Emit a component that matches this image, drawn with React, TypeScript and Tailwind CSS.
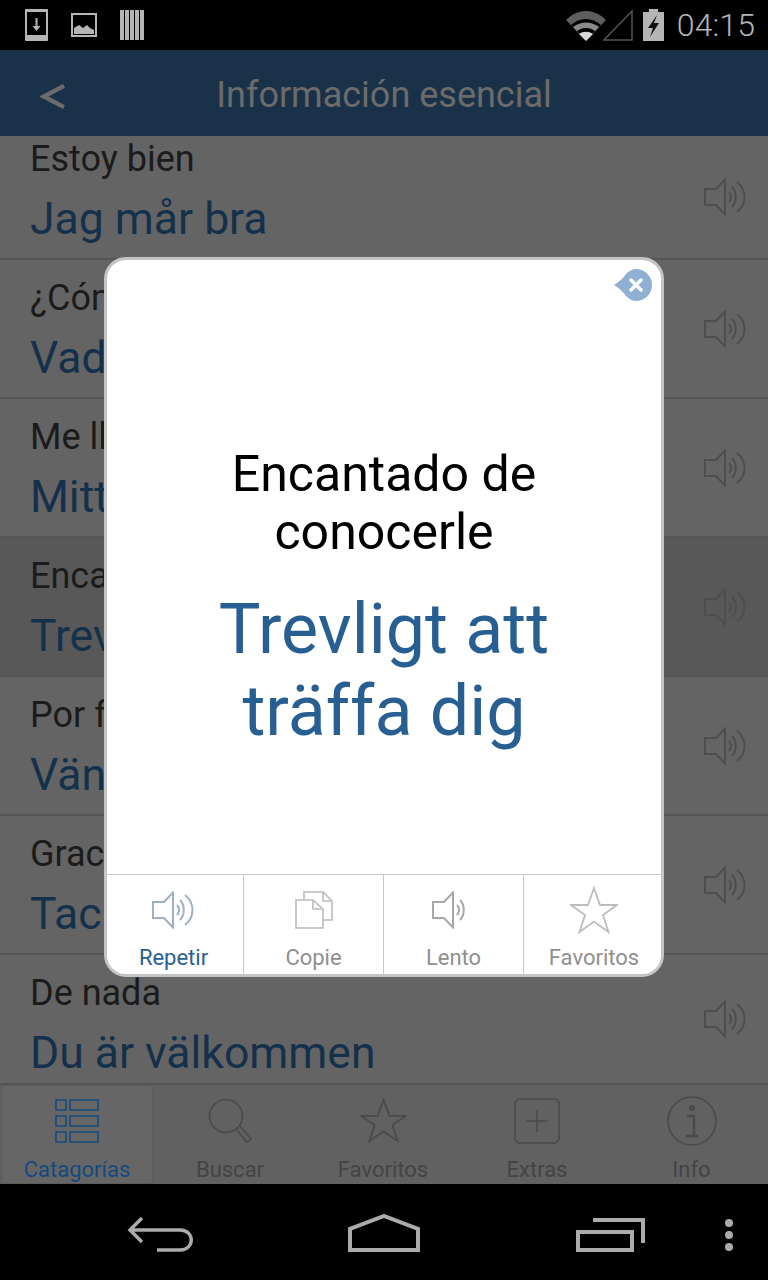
const sans = "font-['Roboto',sans-serif]";

const rows = [
  { es: "Estoy bien", sv: "Jag mår bra", h: "h-[124px]", pad: "pt-[3px]" },
  { es: "¿Cómo estás?", sv: "Vad heter du?", h: "h-[139px]" },
  { es: "Me llamo", sv: "Mitt namn är", h: "h-[139px]" },
  { es: "Encantado de conocerle", sv: "Trevligt att träffa dig", h: "h-[139px]", active: true },
  { es: "Por favor", sv: "Vänligen", h: "h-[139px]" },
  { es: "Gracias", sv: "Tack", h: "h-[139px]" },
  { es: "De nada", sv: "Du är välkommen", h: "h-[128px]", last: true },
];

function Speaker({ className, stroke, waves = 3 }: { className: string; stroke: string; waves?: number }) {
  return (
    <svg viewBox={waves > 2 ? "0 0 42 38" : "0 0 36 38"} className={className} fill="none" stroke={stroke} strokeWidth="2">
      <path d="M1 11h11L21 1.500v35L12 27H1z" />
      <path d="M25 14c2.500 3 2.500 7 0 10" />
      <path d="M28 9c5 5 5 15 0 20" />
      {waves > 2 && <path d="M33 4c10 8 10 22 0 30" />}
    </svg>
  );
}

function Star({ className, stroke }: { className: string; stroke: string }) {
  return (
    <svg viewBox="0 0 48 48" className={className} fill="none" stroke={stroke} strokeWidth="1.800" preserveAspectRatio="none">
      <path d="M24 2l6 17h17L33 29l5.500 17L24 35.500 9.500 46 15 29 1 19h17z" />
    </svg>
  );
}

function ListRow({ row }: { row: (typeof rows)[number] }) {
  return (
    <div className={`relative ${row.h} shrink-0 ${row.last ? "" : "border-b-2 border-[#555555]"} ${row.active ? "bg-[#585858]" : ""} ${row.pad ?? "pt-[18px]"} pl-[30px]`}>
      <p className="text-[36px] leading-[40px] text-[#1b1b1b] whitespace-nowrap">{row.es}</p>
      <p className="mt-[15px] text-[44.500px] leading-[50px] text-[#14304a] whitespace-nowrap">{row.sv}</p>
      <div className="absolute right-[22px] top-1/2 -translate-y-1/2">
        <Speaker className="w-[42px] h-[38px]" stroke="#4e4e4e" />
      </div>
    </div>
  );
}

function ModalAction({ label, active, children, className }: { label: string; active?: boolean; children: React.ReactNode; className: string }) {
  return (
    <div className={`flex flex-col items-center pb-[2px] h-full ${className}`}>
      <div className="flex-1 flex items-center justify-center pt-[1px]">{children}</div>
      <span className={`text-[22px] leading-[28px] ${active ? "text-[#285f92]" : "text-[#8f8f8f]"}`}>{label}</span>
    </div>
  );
}

function TabItem({ label, active, children, className }: { label: string; active?: boolean; children: React.ReactNode; className: string }) {
  return (
    <div className={`flex flex-col items-center h-full border rounded-[3px] ${className} ${active ? "bg-[#666666] border-[#5c5c5c]" : "border-transparent"}`}>
      <div className="h-[64px] mt-[3px] flex items-center justify-center">{children}</div>
      <span className={`text-[22px] leading-[26px] mt-[5px] whitespace-nowrap ${active ? "text-[#14497f]" : "text-[#444444]"}`}>{label}</span>
    </div>
  );
}

export default function App() {
  return (
    <div className={`relative w-[768px] h-[1280px] overflow-hidden bg-black ${sans}`}>
      {/* status bar */}
      <div className="h-[50px] flex items-center justify-between pl-[25px] pr-[13px]">
        <div className="flex items-center gap-[23px]">
          <svg viewBox="0 0 23 32" className="w-[23px] h-[32px]" fill="#b5b5b5">
            <path fillRule="evenodd" d="M0 1q0-1 1-1h21q1 0 1 1v30q0 1-1 1H1q-1 0-1-1zM2 3v23h19V3z" />
            <path d="M10.500 9h2v8h3l-4 5-4-5h3z" />
          </svg>
          <svg viewBox="0 0 26 24" className="w-[26px] h-[24px]" fill="#b5b5b5">
            <path fillRule="evenodd" d="M0 0h26v24H0zM2 2v20h22V2z" />
            <path d="M3 21v-6l5-3 4 3 4-3 3 3 4 2v4z" />
          </svg>
          <svg viewBox="0 0 24 30" className="w-[24px] h-[30px]" fill="#b5b5b5">
            <path d="M0 0h4v30H0zM5 0h4v30H5zM10 0h4v30h-4zM15 0h4v30h-4zM20 0h4v30h-4z" />
          </svg>
        </div>
        <div className="flex items-center">
          <svg viewBox="0 0 40 30" className="w-[40px] h-[30px] -mb-[1px]">
            <path d="M0 9c12-12 28-12 40 0L20 30z" fill="#5e5e5e" />
            <path d="M5 14c9-8 21-8 30 0L20 30z" fill="#000000" />
            <path d="M7 16c8-6 18-6 26 0L20 30z" fill="#8a8a8a" />
            <path d="M11 20c5-4 13-4 18 0L20 30z" fill="#000000" />
            <path d="M13 23c4-3 10-3 14 0l-7 7z" fill="#d6d6d6" />
          </svg>
          <svg viewBox="0 0 30 32" className="w-[30px] h-[32px] -ml-[3px] -mt-[1px]" fill="none" stroke="#565656" strokeWidth="1.500">
            <path d="M29 2v29H1z" />
          </svg>
          <svg viewBox="0 0 21 32" className="w-[21px] h-[32px] ml-[10px] -mt-[1px]">
            <path d="M6 0h9v3h6v29H0V3h6z" fill="#b5b5b5" />
            <path d="M14 6L5 19h5l-3 9 9-14h-5z" fill="#111111" />
          </svg>
          <span className="ml-[13px] text-[32px] leading-[36px] font-light text-[#b5b5b5] tracking-[0.100px]">04:15</span>
        </div>
      </div>

      {/* title bar */}
      <div className="relative h-[86px] bg-[#1a3249] flex items-center justify-center">
        <svg viewBox="0 0 26 28" className="absolute left-[40px] top-[33px] w-[25px] h-[27px]" fill="none" stroke="#6b6b6b" strokeWidth="4.500">
          <path d="M25 3L4 14l21 11" />
        </svg>
        <span className="text-[36px] leading-[44px] mt-[4px] text-[#6b6b6b]">Información esencial</span>
      </div>

      {/* list */}
      <div className="h-[1048px] bg-[#646464] flex flex-col overflow-hidden">
        {rows.map((row) => (
          <ListRow key={row.es} row={row} />
        ))}
        {/* tab bar */}
        <div className="h-[101px] shrink-0 border-t-2 border-[#555555] bg-[#616161] flex pl-[1px]">
          <TabItem label="Catagorías" active className="w-[152px]">
            <svg viewBox="0 0 44 44" className="w-[44px] h-[44px]" fill="none" stroke="#17497f" strokeWidth="1.600">
              <path d="M1 1h10v10H1zM15 1h28v10H15zM1 17h10v10H1zM15 17h28v10H15zM1 33h10v10H1zM15 33h28v10H15z" />
            </svg>
          </TabItem>
          <TabItem label="Buscar" className="w-[154px]">
            <svg viewBox="0 0 44 44" className="w-[44px] h-[44px]" fill="none" stroke="#4a4a4a" strokeWidth="1.600">
              <circle cx="18" cy="17" r="16.500" />
              <path d="M28 30l11 13.500 4-3.500-11-13" />
            </svg>
          </TabItem>
          <TabItem label="Favoritos" className="w-[152px]">
            <Star className="w-[47px] h-[45px]" stroke="#4a4a4a" />
          </TabItem>
          <TabItem label="Extras" className="w-[156px]">
            <svg viewBox="0 0 46 46" className="w-[46px] h-[46px]" fill="none" stroke="#4a4a4a" strokeWidth="1.600">
              <rect x="1" y="1" width="44" height="44" rx="5" />
              <path d="M23 12v22M12 23h22" />
            </svg>
          </TabItem>
          <TabItem label="Info" className="flex-1">
            <svg viewBox="0 0 50 50" className="w-[50px] h-[50px]" fill="none" stroke="#4a4a4a" strokeWidth="1.600">
              <circle cx="25" cy="25" r="24" />
              <circle cx="25" cy="12" r="3" fill="#4a4a4a" stroke="none" />
              <path d="M20 20h7v20M19 40h12" strokeWidth="2.500" />
            </svg>
          </TabItem>
        </div>
      </div>

      {/* nav bar */}
      <div className="relative h-[96px]">
        <svg viewBox="0 0 66 36" className="absolute left-[127px] top-[33px] w-[66px] h-[36px]" fill="none" stroke="#ababab" strokeWidth="3.500">
          <path d="M15 1L3 13l12 12M3 13h50c15 0 15 20 0 20H30" />
        </svg>
        <svg viewBox="0 0 72 38" className="absolute left-[348px] top-[30px] w-[72px] h-[38px]" fill="none" stroke="#ababab" strokeWidth="4">
          <path d="M2 36V15L36 2l34 13v21z" />
        </svg>
        <svg viewBox="0 0 69 34" className="absolute left-[576px] top-[34px] w-[69px] h-[34px]" fill="none" stroke="#ababab" strokeWidth="4">
          <path d="M2 14h54v18H2zM17 2h50v23" />
        </svg>
        <div className="absolute left-[725px] top-[35px] flex flex-col gap-[4px]">
          <span className="w-[8px] h-[8px] rounded-full bg-[#ababab]" />
          <span className="w-[8px] h-[8px] rounded-full bg-[#ababab]" />
          <span className="w-[8px] h-[8px] rounded-full bg-[#ababab]" />
        </div>
      </div>

      {/* modal */}
      <div className="absolute left-[104px] top-[257px] w-[560px] h-[720px] bg-white border-[3px] border-[#c4c4c4] rounded-[22px] overflow-hidden flex flex-col">
        <svg viewBox="0 0 38 32" className="absolute right-[9px] top-[9px] w-[38px] h-[32px]">
          <path d="M0 16Q8 11 12 5Q17 0 22 0a16 16 0 0 1 0 32Q17 32 12 27Q8 21 0 16z" fill="#8fb0d2" />
          <path d="M17 11l10 10M27 11L17 21" stroke="#ffffff" strokeWidth="3.500" strokeLinecap="round" />
        </svg>
        <div className="flex-1 flex flex-col items-center text-center pt-[185px]">
          <p className="w-[400px] text-[50px] leading-[58px] text-black">Encantado de conocerle</p>
          <p className="w-[440px] mt-[27px] text-[70px] leading-[82px] text-[#285f92]">Trevligt att träffa dig</p>
        </div>
        <div className="h-[100px] border-t border-[#c8c8c8] flex">
          <ModalAction label="Repetir" active className="w-[137px] border-r border-[#c8c8c8] pr-[3px]">
            <Speaker className="w-[42px] h-[38px] mr-[2px]" stroke="#9fb0c2" />
          </ModalAction>
          <ModalAction label="Copie" className="w-[140px] border-r border-[#c8c8c8]">
            <svg viewBox="0 0 38 38" className="w-[38px] h-[38px]" fill="none" stroke="#bbbbbb" strokeWidth="1.600">
              <path d="M9 8V1h19l9 9v19H28" />
              <path d="M28 1v9h9" />
              <path d="M1 9h17l10 9v19H1z" />
              <path d="M18 9v9h10" />
            </svg>
          </ModalAction>
          <ModalAction label="Lento" className="w-[140px] border-r border-[#c8c8c8]">
            <Speaker className="w-[36px] h-[38px] mr-[7px]" stroke="#a8a8a8" waves={2} />
          </ModalAction>
          <ModalAction label="Favoritos" className="flex-1 pl-[3px]">
            <Star className="w-[48px] h-[48px]" stroke="#bdbdbd" />
          </ModalAction>
        </div>
      </div>
    </div>
  );
}
